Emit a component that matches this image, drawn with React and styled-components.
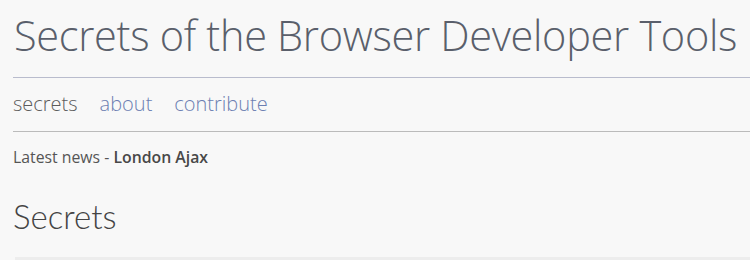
import React from "react";
import styled, { createGlobalStyle } from "styled-components";

const GlobalStyle = createGlobalStyle`
    body {
        margin: 0;
        background: #f8f8f8;
        font-family: "Open Sans", "Liberation Sans", sans-serif;
        color: #555;
        overflow: hidden;
    }
`;

const Page = styled.div`
    padding-left: 13px;
    width: 100%;
    height: 260px;
    box-sizing: border-box;
    overflow: hidden;
`;

const Title = styled.h1`
    margin: 0;
    padding: 7px 0 14px 1px;
    font-family: "Open Sans", sans-serif;
    font-weight: 300;
    font-size: 41.5px;
    line-height: 56px;
    color: #5a5f6b;
    white-space: nowrap;
    letter-spacing: -0.3px;
`;

const Rule = styled.hr`
    margin: 0;
    border: 0;
    border-top: 1px solid ${(p) => p.color || "#bbb"};
`;

const Nav = styled.nav`
    display: flex;
    gap: 22px;
    padding: 11px 0 0 0;
    height: 53px;
    box-sizing: border-box;
`;

const NavLink = styled.a`
    font-family: "Open Sans", sans-serif;
    font-weight: 300;
    font-size: 20px;
    line-height: 30px;
    text-decoration: none;
    color: ${(p) => (p.active ? "#5c5c5c" : "#6c7fb2")};
`;

const News = styled.p`
    margin: 0;
    padding-top: 14px;
    font-size: 15.8px;
    line-height: 22px;
    color: #555;

    b {
        font-weight: 600;
        color: #484848;
    }
`;

const Heading = styled.h2`
    margin: 0;
    padding-top: 28px;
    font-family: "Lato", sans-serif;
    font-weight: 300;
    font-size: 33px;
    line-height: 40px;
    color: #444;
`;

const Card = styled.div`
    margin: 21px 0 0 2px;
    height: 3px;
    background: #ededed;
`;

const App = () => {
    return (
        <Page>
            <GlobalStyle />
            <Title>Secrets of the Browser Developer Tools</Title>
            <Rule color="#b9bccd" />
            <Nav>
                <NavLink active href="#">secrets</NavLink>
                <NavLink href="#">about</NavLink>
                <NavLink href="#">contribute</NavLink>
            </Nav>
            <Rule color="#bbb" />
            <News>
                Latest news - <b>London Ajax</b>
            </News>
            <Heading>Secrets</Heading>
            <Card />
        </Page>
    );
};

export default App;
